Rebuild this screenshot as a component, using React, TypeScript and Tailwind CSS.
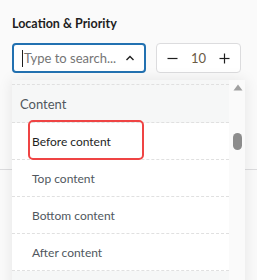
import React from "react";

const font = { fontFamily: 'Lato, "Noto Sans", sans-serif' };

export default function App() {
  const items = ["Before content", "Top content", "Bottom content", "After content"];
  return (
    <div className="relative w-[257px] h-[280px] overflow-hidden bg-[#fafafa]" style={font}>
      <div className="px-3 pt-[14px]">
        <div className="text-[12.5px] font-bold text-[#1e1e1e] leading-[20px]">Location &amp; Priority</div>
        <div className="mt-[9px] flex gap-[10px]">
          <div className="w-[134px] h-[30px] border-2 border-[#2271b1] rounded-[4px] bg-white flex items-center pl-[8px] pr-[8px]">
            <span className="w-px h-[17px] bg-[#1e1e1e] mr-px"></span>
            <span className="text-[13px] text-[#757575] flex-1 leading-none">Type to search...</span>
            <svg width="10" height="6" viewBox="0 0 10 6" className="mr-[1px]">
              <polyline points="1.5,5 5,1.5 8.5,5" fill="none" stroke="#1e1e1e" strokeWidth="1.4" />
            </svg>
          </div>
          <div className="w-[85px] h-[30px] border border-[#dcdcde] rounded-[4px] bg-white flex items-center justify-between px-[10px] text-[#50575e]">
            <svg width="11" height="11" viewBox="0 0 11 11">
              <line x1="0.5" y1="5.5" x2="10.5" y2="5.5" stroke="#1e1e1e" strokeWidth="1.2" />
            </svg>
            <span className="text-[13px] leading-none text-[#6b5a45]">10</span>
            <svg width="11" height="11" viewBox="0 0 11 11">
              <line x1="0.5" y1="5.5" x2="10.5" y2="5.5" stroke="#1e1e1e" strokeWidth="1.2" />
              <line x1="5.5" y1="0.5" x2="5.5" y2="10.5" stroke="#1e1e1e" strokeWidth="1.2" />
            </svg>
          </div>
        </div>
      </div>
      <div className="mt-[96px] border-t border-[#dcdcde]"></div>

      <div className="absolute left-[12px] top-[80px] w-[233px] h-[220px] bg-white shadow-[0_0_14px_rgba(0,0,0,0.09)] flex">
        <div className="w-[217px] flex flex-col">
          <div className="h-[5px] bg-[#f6f7f7] border-b border-dashed border-[#e0e0e0]"></div>
          <div className="h-[38px] bg-[#f6f7f7] border-b border-dashed border-[#e0e0e0] flex items-center pl-[8px] pt-[2px] text-[13px] text-[#50575e]">
            Content
          </div>
          {items.map((t, i) => (
            <div
              key={t}
              className="relative h-[37px] border-b border-dashed border-[#e0e0e0] flex items-center pl-[20px] pt-[1px] text-[12px]"
            >
              {i === 0 && (
                <div className="absolute left-[16px] top-[-3px] w-[116px] h-[40px] border-[2.5px] border-[#ef4444] rounded-[5px]"></div>
              )}
              <span className={i === 0 ? "text-[#1e1e1e]" : "text-[#50575e]"}>{t}</span>
            </div>
          ))}
          <div className="flex-1 bg-[#f6f7f7]"></div>
        </div>
        <div className="w-[16px] bg-[#fafafa] relative">
          <svg width="10" height="7" viewBox="0 0 10 7" className="absolute left-[4px] top-[4px]">
            <polygon points="5,0.5 9.5,6.5 0.5,6.5" fill="#a0a0a0" />
          </svg>
          <div className="absolute left-[4px] top-[53px] w-[9px] h-[17px] rounded-full bg-[#8c8c8c]"></div>
        </div>
      </div>
    </div>
  );
}
